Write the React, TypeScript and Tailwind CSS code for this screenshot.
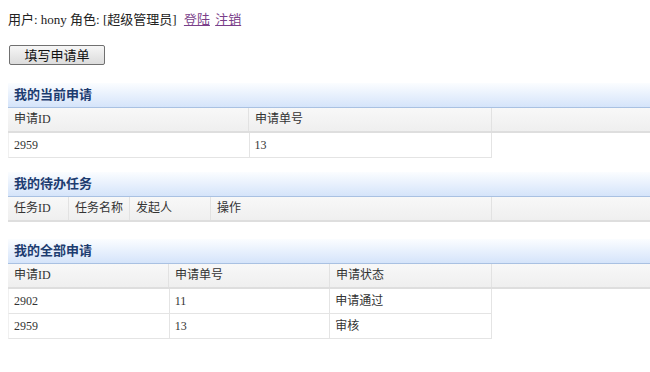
import React from "react"

type Section = {
  title: string
  cols: { label: string; w: number }[]
  rows: string[][]
}

const SECTIONS: Section[] = [
  {
    title: "我的当前申请",
    cols: [
      { label: "申请ID", w: 241 },
      { label: "申请单号", w: 243 },
    ],
    rows: [["2959", "13"]],
  },
  {
    title: "我的待办任务",
    cols: [
      { label: "任务ID", w: 61 },
      { label: "任务名称", w: 61 },
      { label: "发起人", w: 81 },
      { label: "操作", w: 281 },
    ],
    rows: [],
  },
  {
    title: "我的全部申请",
    cols: [
      { label: "申请ID", w: 161 },
      { label: "申请单号", w: 161 },
      { label: "申请状态", w: 162 },
    ],
    rows: [
      ["2902", "11", "申请通过"],
      ["2959", "13", "审核"],
    ],
  },
]

function Panel({ section, gap }: { section: Section; gap: string }) {
  return (
    <div className={gap}>
      <div className="h-[25px] flex items-center pl-[6px] bg-gradient-to-b from-[#fbfdff] to-[#d5e4fa] border-b border-[#a9c1e2]">
        <span className="text-[13px] font-bold text-[#1d3c70]">{section.title}</span>
      </div>
      <div className="flex h-[25px] bg-gradient-to-b from-[#f8f8f8] to-[#efefef] border-b-2 border-[#dedede]">
        {section.cols.map((c, i) => (
          <div
            key={i}
            style={{ width: c.w }}
            className="flex items-center pl-[6px] border-r border-[#e2e2e2] text-[12px] text-[#333]"
          >
            {c.label}
          </div>
        ))}
        <div className="flex-1" />
      </div>
      {section.rows.map((r, ri) => (
        <div key={ri} className="flex h-[25px] w-[484px] border-b border-[#e4e4e4] border-l border-l-[#f0f0f0]">
          {r.map((v, ci) => (
            <div
              key={ci}
              style={{ width: section.cols[ci].w }}
              className="flex items-center pl-[5px] border-r border-[#e4e4e4] text-[12px] text-[#333]"
            >
              {v}
            </div>
          ))}
        </div>
      ))}
    </div>
  )
}

export default function App() {
  return (
    <div
      className="w-[650px] h-[372px] bg-white pl-[8px] pt-[12px] overflow-hidden"
      style={{ fontFamily: '"Liberation Serif", "Noto Sans CJK SC", serif' }}
    >
      <div className="text-[13px] leading-[16px] text-[#222]">
        用户: hony 角色: [超级管理员]{" "}
        <a href="#" className="text-[#7a3f8a] underline ml-[4px]">登陆</a>{" "}
        <a href="#" className="text-[#7a3f8a] underline ml-[2px]">注销</a>
      </div>
      <button className="mt-[17px] ml-[1px] w-[96px] h-[20px] text-[13px] leading-none text-[#111] border border-[#707070] rounded-[2px] bg-gradient-to-b from-[#f6f6f6] to-[#dcdcdc]">
        填写申请单
      </button>
      <Panel section={SECTIONS[0]} gap="mt-[16px]" />
      <Panel section={SECTIONS[1]} gap="mt-[14px]" />
      <Panel section={SECTIONS[2]} gap="mt-[17px]" />
    </div>
  )
}
